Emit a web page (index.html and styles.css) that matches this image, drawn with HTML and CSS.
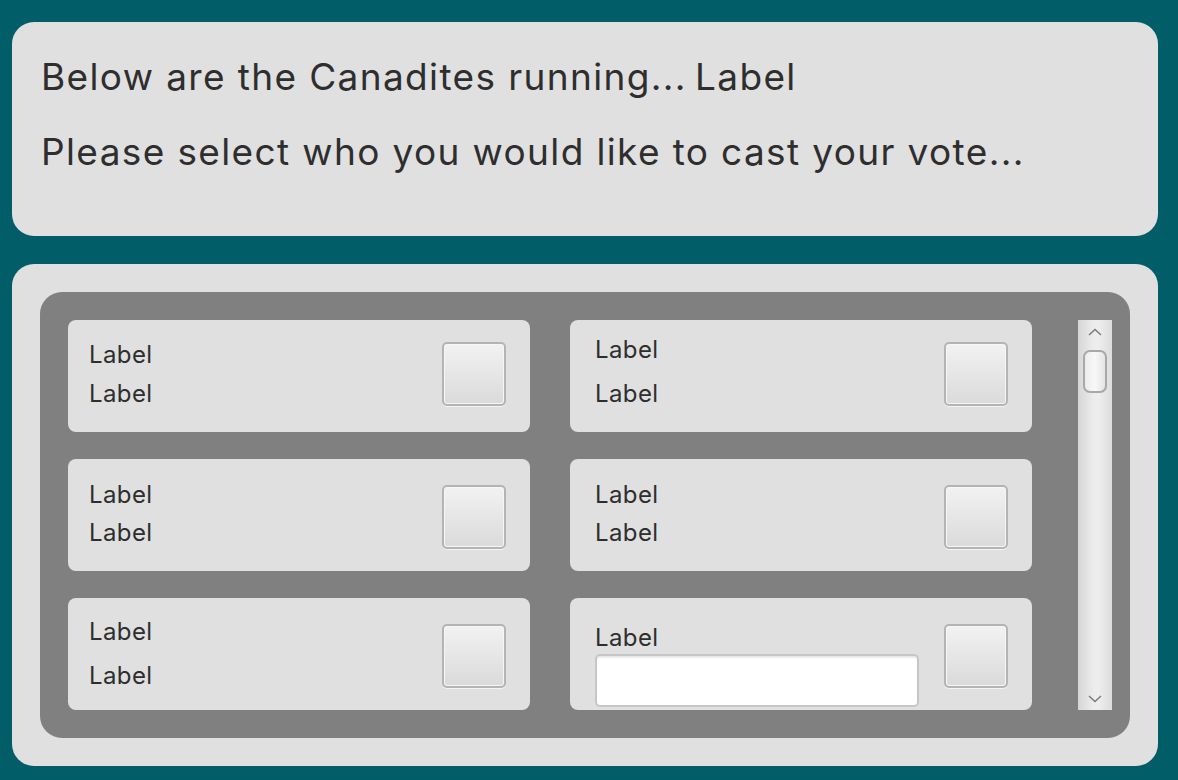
FILE: index.html
```html
<!DOCTYPE html>
<html>
<head>
<meta charset="utf-8">
<link rel="stylesheet" href="styles.css">
</head>
<body>
<div class="page">
  <section class="header-card">
    <p class="line line-1">Below are the Canadites running...&#8201;Label</p>
    <p class="line line-2">Please select who you would like to cast your vote...</p>
  </section>
  <section class="list-card">
    <div class="panel">
      <div class="grid">
        <div class="item left first">
          <div class="labels l1"><span>Label</span><span>Label</span></div>
          <span class="check"></span>
        </div>
        <div class="item right first">
          <div class="labels r1"><span>Label</span><span>Label</span></div>
          <span class="check"></span>
        </div>
        <div class="item left">
          <div class="labels l2"><span>Label</span><span>Label</span></div>
          <span class="check"></span>
        </div>
        <div class="item right">
          <div class="labels l2"><span>Label</span><span>Label</span></div>
          <span class="check"></span>
        </div>
        <div class="item left">
          <div class="labels l3"><span>Label</span><span>Label</span></div>
          <span class="check"></span>
        </div>
        <div class="item right">
          <div class="labels r3"><span>Label</span><input class="field" type="text"></div>
          <span class="check"></span>
        </div>
      </div>
      <div class="scrollbar">
        <svg class="arrow" width="14" height="8" viewBox="0 0 14 8"><path d="M1 7 L7 1.5 L13 7" fill="none" stroke="#7a7a7a" stroke-width="1.4"/></svg>
        <div class="thumb"></div>
        <div class="spacer"></div>
        <svg class="arrow" width="14" height="8" viewBox="0 0 14 8"><path d="M1 1 L7 6.5 L13 1" fill="none" stroke="#7a7a7a" stroke-width="1.4"/></svg>
      </div>
    </div>
  </section>
</div>
</body>
</html>
```
FILE: styles.css
```css
html, body {
  margin: 0;
  padding: 0;
  background: #015d67;
}
body {
  font-family: Inter, "Helvetica Neue", "Liberation Sans", sans-serif;
  color: #2e2e2e;
}
.page {
  width: 1146px;
  padding: 22px 20px 14px 12px;
  display: flex;
  flex-direction: column;
  gap: 28px;
}
.header-card {
  background: #e0e0e0;
  border-radius: 22px;
  height: 214px;
  box-sizing: border-box;
  padding: 0 0 0 29px;
}
.line {
  margin: 0;
  font-size: 37px;
  line-height: 44px;
  letter-spacing: 1.37px;
}
.line-1 { padding-top: 33px; }
.line-2 { padding-top: 31px; }
.list-card {
  background: #e0e0e0;
  border-radius: 22px;
  height: 502px;
  box-sizing: border-box;
  padding: 28px;
}
.panel {
  background: #808080;
  border-radius: 22px;
  height: 446px;
  box-sizing: border-box;
  padding: 28px 18px 28px 28px;
  display: flex;
}
.grid {
  display: grid;
  grid-template-columns: 462px 462px;
  grid-template-rows: 112px 112px 112px;
  column-gap: 40px;
  row-gap: 27px;
  align-content: start;
}
.item {
  background: #e0e0e0;
  border-radius: 8px;
  display: flex;
  align-items: flex-start;
  justify-content: space-between;
  padding-right: 24px;
}
.item.left { padding-left: 21px; }
.item.right { padding-left: 25px; }
.labels {
  display: flex;
  flex-direction: column;
  font-size: 24px;
  line-height: 26px;
  letter-spacing: 0.4px;
}
.labels span { display: block; }
.l1 { padding-top: 22px; gap: 13px; }
.r1 { padding-top: 17px; gap: 18px; }
.l2 { padding-top: 23px; gap: 12px; }
.l3 { padding-top: 21px; gap: 18px; }
.r3 { padding-top: 27px; gap: 3px; }
.check {
  width: 64px;
  height: 64px;
  box-sizing: border-box;
  border: 2px solid #b4b4b4;
  border-radius: 5px;
  background: linear-gradient(#f2f2f2, #dadada);
  box-shadow: inset 0 0 0 1px #f6f6f6, 0 1px 0 #f4f4f4;
  margin-top: 26px;
}
.first .check { margin-top: 22px; }
.field {
  width: 324px;
  height: 53px;
  box-sizing: border-box;
  border: 2px solid #c6c6c6;
  border-radius: 5px;
  background: #fff;
  box-shadow: inset 0 3px 3px -2px #d8d8d8;
  margin: 0;
  padding: 0;
}
.scrollbar {
  margin-left: 46px;
  width: 34px;
  height: 390px;
  background: linear-gradient(90deg, #d6d6d6 0%, #ececec 45%, #eeeeee 60%, #dcdcdc 100%);
  display: flex;
  flex-direction: column;
  align-items: center;
  box-sizing: border-box;
  padding: 8px 0 7px;
}
.arrow { display: block; flex: none; }
.thumb {
  margin-top: 14px;
  width: 24px;
  height: 43px;
  box-sizing: border-box;
  border: 2px solid #a8a8a8;
  border-radius: 7px;
  background: linear-gradient(90deg, #ececec, #f8f8f8 50%, #e4e4e4);
}
.spacer { flex: 1; }
```
